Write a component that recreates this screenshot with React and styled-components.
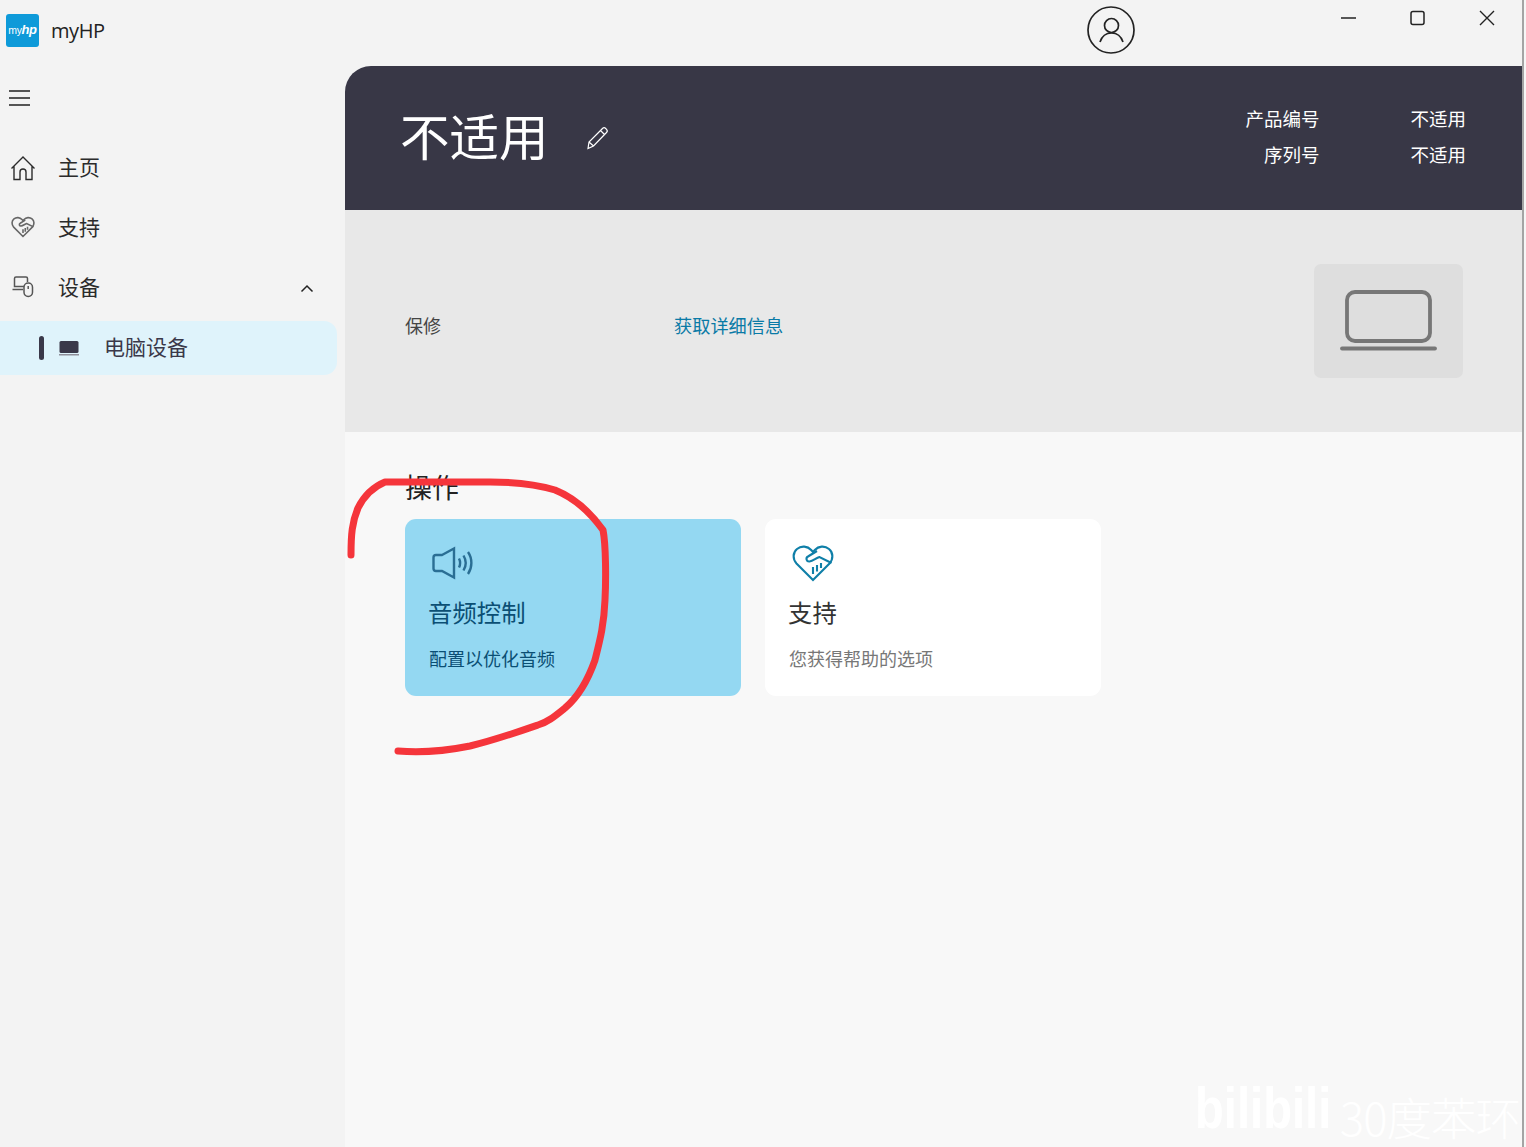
import React from 'react'
import styled, { createGlobalStyle } from 'styled-components'

const GlobalStyle = createGlobalStyle`
  html, body {
    margin: 0;
    padding: 0;
    background: #f3f3f3;
  }
  * {
    box-sizing: border-box;
  }
`

const cjk = `"Noto Sans CJK SC", "Noto Sans", sans-serif`
const latin = `"Open Sans", "Noto Sans CJK SC", sans-serif`

const Screen = styled.div`
  position: relative;
  display: flex;
  width: 1526px;
  height: 1147px;
  overflow: hidden;
  font-family: ${cjk};
  font-weight: 400;
`

const Window = styled.div`
  display: flex;
  flex-direction: column;
  width: 1522px;
  height: 100%;
  background: #f3f3f3;
`

const EdgeStrip = styled.div`
  width: 4px;
  background: #f6f6f6;
  border-left: 2px solid #a4a4a4;
`

const TitleBar = styled.header`
  display: flex;
  align-items: center;
  height: 66px;
  flex: none;
  padding-left: 6px;
`

const Brand = styled.div`
  display: flex;
  align-items: center;
  gap: 12px;
  width: 1081px;
  margin-top: -6px;
  font-family: ${latin};
  font-size: 20px;
  font-weight: 400;
  color: #222;
  letter-spacing: -0.4px;
`

const Logo = styled.div`
  display: flex;
  align-items: baseline;
  justify-content: center;
  width: 33px;
  height: 33px;
  padding-top: 9px;
  border-radius: 3px;
  background: #0e9ad9;
  color: #fff;
  font-family: "Liberation Sans", sans-serif;
  font-size: 10.5px;
  letter-spacing: -0.4px;

  b {
    font-size: 13px;
    font-style: italic;
    line-height: 1;
  }
`

const Avatar = styled.svg`
  width: 48px;
  height: 48px;
  margin-top: -6px;
`

const WindowControls = styled.div`
  display: flex;
  margin-left: 206px;
  margin-top: -30px;
  gap: 54px;
`

const Body = styled.div`
  display: grid;
  grid-template-columns: 345px 1fr;
  flex: 1;
  min-height: 0;
`

const Sidebar = styled.nav`
  display: flex;
  flex-direction: column;
  padding-top: 16px;
`

const Burger = styled.svg`
  width: 21px;
  height: 16px;
  margin: 8px 0 32px 9px;
`

const NavRow = styled.div`
  display: flex;
  align-items: center;
  height: 60px;
  padding: 0 30px 0 10px;
  font-size: 21px;
  color: #2b2b2b;

  svg:first-child {
    width: 26px;
    height: 26px;
    margin-right: 22px;
  }
`

const NavLabel = styled.span`
  margin-bottom: 4px;
`

const Chevron = styled.svg`
  width: 14px;
  height: 9px;
  margin-left: auto;
  margin-right: 1px;
`

const SubRow = styled.div`
  display: flex;
  align-items: center;
  width: 337px;
  height: 54px;
  margin-top: 3px;
  padding-left: 39px;
  border-radius: 0 13px 13px 0;
  background: #dff3fb;
  font-size: 21px;
  color: #3a3849;
`

const Marker = styled.span`
  width: 5px;
  height: 24px;
  border-radius: 3px;
  background: #3a3849;
`

const SubIcon = styled.svg`
  width: 22px;
  height: 16px;
  margin: 0 24px 0 14px;
`

const Main = styled.main`
  display: flex;
  flex-direction: column;
`

const Hero = styled.section`
  display: flex;
  align-items: center;
  justify-content: space-between;
  height: 144px;
  padding: 0 56px 0 55px;
  border-top-left-radius: 26px;
  background: #383746;
  color: #fff;
`

const TitleGroup = styled.div`
  display: flex;
  align-items: center;
  gap: 36px;
`

const Title = styled.h1`
  margin: -6px 0 0;
  font-size: 49.5px;
  font-weight: 400;
  line-height: 60px;
`

const InfoGrid = styled.dl`
  display: grid;
  grid-template-columns: auto auto;
  grid-auto-rows: 36px;
  align-items: center;
  column-gap: 91px;
  margin: -4px 0 0;
  font-size: 18.5px;
`

const InfoLabel = styled.dt`
  text-align: right;
`

const InfoValue = styled.dd`
  margin: 0;
`

const WarrantyBand = styled.section`
  display: flex;
  align-items: center;
  height: 222px;
  padding: 0 59px 0 60px;
  background: #e8e8e8;
`

const WarrantyLabel = styled.span`
  width: 269px;
  margin-top: 8px;
  font-size: 18px;
  color: #444;
`

const WarrantyLink = styled.a`
  margin-top: 8px;
  font-size: 18.2px;
  color: #0a7aa6;
`

const DeviceTile = styled.div`
  display: flex;
  align-items: center;
  justify-content: center;
  width: 149px;
  height: 114px;
  margin-left: auto;
  border-radius: 7px;
  background: #dedede;
`

const Actions = styled.section`
  flex: 1;
  padding: 38px 0 0 60px;
  background: #f8f8f8;
`

const ActionsTitle = styled.h2`
  margin: 0 0 15px;
  font-size: 27px;
  font-weight: 400;
  line-height: 34px;
  color: #222;
`

const CardRow = styled.div`
  display: flex;
  gap: 24px;
`

const Card = styled.article`
  width: 336px;
  height: 177px;
  padding: 24px 24px 0;
  border-radius: 11px;
  background: ${p => p.$active ? '#94d8f2' : '#ffffff'};
`

const CardIcon = styled.svg`
  display: block;
  width: 48px;
  height: 40px;
`

const CardTitle = styled.h3`
  margin: 13px 0 0 -1px;
  font-size: 24.4px;
  font-weight: 400;
  line-height: 32px;
  color: ${p => p.$active ? '#0b4f74' : '#333'};
`

const CardText = styled.p`
  margin: 18px 0 0;
  font-size: 18px;
  line-height: 24px;
  color: ${p => p.$active ? '#0b4f74' : '#777'};
`

const Scribble = styled.svg`
  position: absolute;
  inset: 0;
  width: 1526px;
  height: 1147px;
  pointer-events: none;
`

const Watermark = styled.div`
  position: absolute;
  right: 6px;
  bottom: 3px;
  display: flex;
  align-items: flex-end;
  color: #ffffff;
  pointer-events: none;
`

const WatermarkBrand = styled.span`
  display: block;
  width: 145px;
  font-family: "Liberation Sans", sans-serif;
  font-size: 40px;
  font-weight: 700;
  line-height: 50px;
  transform: scale(1.18, 1.45);
  transform-origin: left bottom;
`

const WatermarkName = styled.span`
  font-size: 45.5px;
  line-height: 56px;
  font-weight: 300;
  letter-spacing: -1px;
`

const handshake = (
  <>
    <path d="M20 35 3.500 18.500C-.5 14-.3 7.500 4 4 8.300.4 14.500 1 18.200 5l1.800 2 1.800-2c3.700-4 9.900-4.600 14.200-1 4.300 3.500 4.500 10 .5 14.500L20 35Z" />
    <path d="M24 6 15 11.500c-2.600 1.500-1.600 5.300 1.500 5 3.500-.4 6.500-3.500 10-4.500l12 6" />
    <path d="M20 22v7M24 20v6.500M28 18v5" />
  </>
)

export default function App() {
  return (
    <Screen>
      <GlobalStyle />
      <Window>
        <TitleBar>
          <Brand>
            <Logo>my<b>hp</b></Logo>
            myHP
          </Brand>
          <Avatar viewBox="0 0 48 48" fill="none" stroke="#222" strokeWidth="1.7">
            <circle cx="24" cy="24" r="23" />
            <circle cx="24.500" cy="19.500" r="7" />
            <path d="M13 36c2-6 6-9 11.500-9S34 30 36 36" />
          </Avatar>
          <WindowControls>
            <svg width="15" height="16" viewBox="0 0 15 16" fill="none" stroke="#222" strokeWidth="1.500">
              <path d="M0 8h15" />
            </svg>
            <svg width="15" height="16" viewBox="0 0 15 16" fill="none" stroke="#222" strokeWidth="1.500">
              <rect x="1" y="1.500" width="13" height="13" rx="2" />
            </svg>
            <svg width="16" height="16" viewBox="0 0 16 16" fill="none" stroke="#222" strokeWidth="1.400">
              <path d="m1 1 14 14M15 1 1 15" />
            </svg>
          </WindowControls>
        </TitleBar>
        <Body>
          <Sidebar>
            <Burger viewBox="0 0 21 16" fill="none" stroke="#222" strokeWidth="1.300">
              <path d="M0 1h21M0 8h21M0 15h21" />
            </Burger>
            <NavRow>
              <svg viewBox="0 0 26 26" fill="none" stroke="#2b2b2b" strokeWidth="1.400">
                <path d="M1.500 13.500 13 2l11.500 11.500M4 11.500V24.500h6V17a3 3 0 0 1 6 0v7.500h6V11.500" />
              </svg>
              <NavLabel>主页</NavLabel>
            </NavRow>
            <NavRow>
              <svg viewBox="-3 -3 46 46" fill="none" stroke="#666" strokeWidth="2.800">
                {handshake}
              </svg>
              <NavLabel>支持</NavLabel>
            </NavRow>
            <NavRow>
              <svg viewBox="0 0 26 26" fill="none" stroke="#555" strokeWidth="1.500">
                <path d="M14 11.500H4.500V3.500c0-1 .6-1.500 1.500-1.500h10c1 0 1.500.5 1.500 1.500V7M2.500 14.500H13" />
                <rect x="14" y="8" width="8.500" height="13.500" rx="4.200" />
                <path d="M18.200 11v3" />
              </svg>
              <NavLabel>设备</NavLabel>
              <Chevron viewBox="0 0 14 9" fill="none" stroke="#222" strokeWidth="1.500">
                <path d="m1.500 7.500 5.500-5.500 5.500 5.500" />
              </Chevron>
            </NavRow>
            <SubRow>
              <Marker />
              <SubIcon viewBox="0 0 22 16" fill="#3a3849">
                <rect x="1.500" y="1" width="19" height="12" rx="1.500" />
                <rect x="1" y="14" width="20" height="1.500" fill="#8f8f9a" />
              </SubIcon>
              <NavLabel>电脑设备</NavLabel>
            </SubRow>
          </Sidebar>
          <Main>
            <Hero>
              <TitleGroup>
                <Title>不适用</Title>
                <svg width="24" height="24" viewBox="0 0 24 24" fill="none" stroke="#fff" strokeWidth="1.200">
                  <path d="M3 22.500 4 16 17.500 2.500c1-1 2.200-1 3.200 0l.8.8c1 1 1 2.200 0 3.200L8.500 20 3 22.500ZM4 16l4.500 4M15.500 4.500l4.500 4.500" />
                </svg>
              </TitleGroup>
              <InfoGrid>
                <InfoLabel>产品编号</InfoLabel>
                <InfoValue>不适用</InfoValue>
                <InfoLabel>序列号</InfoLabel>
                <InfoValue>不适用</InfoValue>
              </InfoGrid>
            </Hero>
            <WarrantyBand>
              <WarrantyLabel>保修</WarrantyLabel>
              <WarrantyLink>获取详细信息</WarrantyLink>
              <DeviceTile>
                <svg width="97" height="62" viewBox="0 0 97 62" fill="none" stroke="#777" strokeWidth="3.800">
                  <rect x="7" y="2" width="83" height="49" rx="8" />
                  <path d="M2 58.500h93" strokeLinecap="round" />
                </svg>
              </DeviceTile>
            </WarrantyBand>
            <Actions>
              <ActionsTitle>操作</ActionsTitle>
              <CardRow>
                <Card $active>
                  <CardIcon viewBox="0 0 48 40" fill="none" stroke="#2a6e94" strokeWidth="2.400">
                    <path d="M13 12 25 5.500v29L13 28H7c-1.500 0-2.500-1-2.500-2.500v-11C4.500 13 5.500 12 7 12h6Z" />
                    <path d="M30 15.500c1.500 3 1.500 6 0 9M34.500 12.500c2.700 4.500 2.700 10.500 0 15M39 9c4.500 6.500 4.500 15.500 0 22" />
                  </CardIcon>
                  <CardTitle $active>音频控制</CardTitle>
                  <CardText $active>配置以优化音频</CardText>
                </Card>
                <Card>
                  <CardIcon viewBox="-4 -2 48 40" fill="none" stroke="#0f7fa8" strokeWidth="2.100">
                    {handshake}
                  </CardIcon>
                  <CardTitle>支持</CardTitle>
                  <CardText>您获得帮助的选项</CardText>
                </Card>
              </CardRow>
            </Actions>
          </Main>
        </Body>
      </Window>
      <EdgeStrip />
      <Scribble viewBox="0 0 1526 1147" fill="none" stroke="#f5353b" strokeWidth="7" strokeLinecap="round" strokeLinejoin="round">
        <path d="M351 555C351 535 352 522 358 508 364 496 373 487 385 482 420 482 450 482 490 482 515 482 535 484 555 490 575 498 590 512 603 530 606 545 606 580 605 600 604 625 600 640 595 660 588 680 578 697 565 708 555 716 548 722 538 725 515 733 495 740 470 746 445 751 420 753 398 751" />
      </Scribble>
      <Watermark>
        <WatermarkBrand>bilibili</WatermarkBrand>
        <WatermarkName>30度苯环</WatermarkName>
      </Watermark>
    </Screen>
  )
}
